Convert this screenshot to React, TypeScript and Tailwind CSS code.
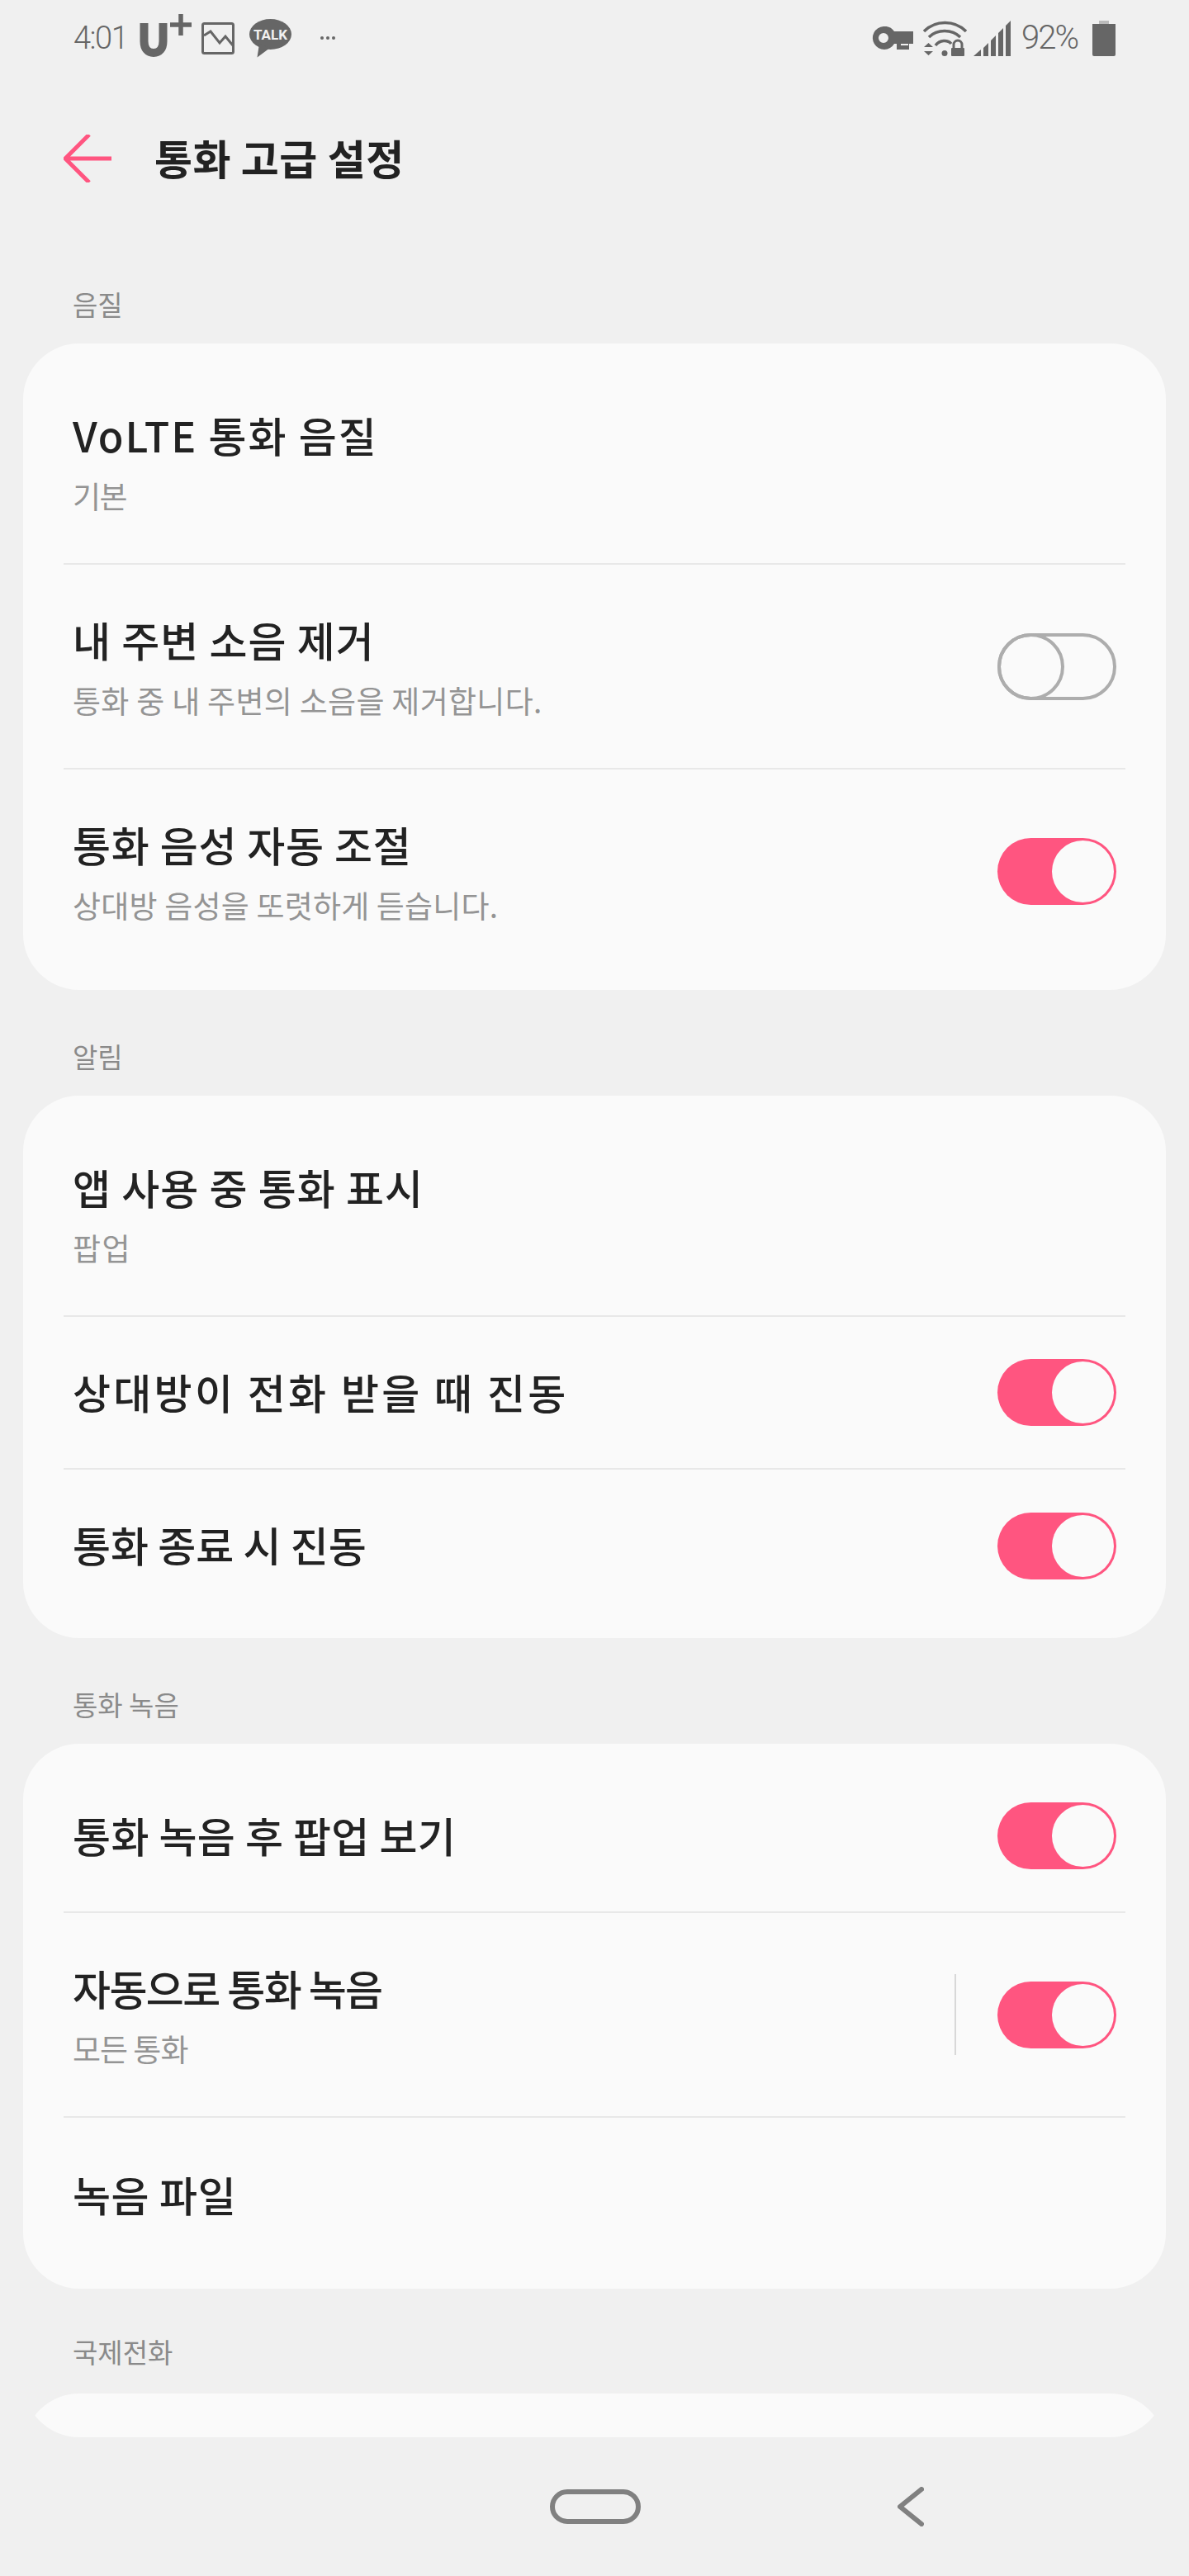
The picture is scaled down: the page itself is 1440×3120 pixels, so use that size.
import type { ReactNode } from "react";

function Toggle({ on }: { on: boolean }) {
  if (on) {
    return (
      <div className="flex h-[81px] w-[144px] shrink-0 items-center justify-end rounded-full bg-[#ff5580] pr-[3px]">
        <div className="h-[75px] w-[75px] rounded-full bg-[#fafafa]" />
      </div>
    );
  }
  return (
    <div className="flex h-[81px] w-[144px] shrink-0 items-center rounded-full border-[4px] border-[#adadad]">
      <div className="-ml-[4px] h-[81px] w-[81px] shrink-0 rounded-full border-[4px] border-[#adadad]" />
    </div>
  );
}

function Row({
  title,
  sub,
  toggle,
  height,
  split,
  titleClass = "",
  subClass = "",
}: {
  title: string;
  sub?: string;
  toggle?: "on" | "off";
  height: string;
  split?: boolean;
  titleClass?: string;
  subClass?: string;
}) {
  return (
    <div className={`mx-[49px] flex items-center justify-between border-b-2 border-[#e8e8e8] px-[11px] last:border-b-0 ${height}`}>
      <div className="pb-[4px]">
        <div className={`text-[50px] leading-[70px] font-medium text-[#222222] ${titleClass}`}>{title}</div>
        {sub && <div className={`mt-[15px] text-[37px] leading-[48px] text-[#949494] ${subClass}`}>{sub}</div>}
      </div>
      {toggle && (
        <div className="flex items-center">
          {split && <div className="mr-[50px] h-[98px] w-[2px] bg-[#d8d8d8]" />}
          <Toggle on={toggle === "on"} />
        </div>
      )}
    </div>
  );
}

function Section({ label, children }: { label: string; children: ReactNode }) {
  return (
    <section>
      <div className="h-[128px] pt-[60px] pl-[88px] text-[33px] leading-[40px] text-[#8a8a8a]">{label}</div>
      <div className="mx-[28px] rounded-[68px] bg-[#fafafa] py-[20px]">{children}</div>
    </section>
  );
}

function StatusLeft() {
  return (
    <div className="flex items-center">
      <span className="w-[81px] pl-[1px] font-['Roboto',sans-serif] text-[38px] font-light tracking-[-1.500px] text-[#666666]">4:01</span>
      <svg width="63" height="52" viewBox="0 0 63 52" className="mr-[12px] mb-[7px]">
        <path d="M5.500 11V33C5.500 42 10 47 17 47C24 47 28.500 42 28.500 33V11" fill="none" stroke="#666666" strokeWidth="10" />
        <path d="M50 0V26M37 13H63" fill="none" stroke="#666666" strokeWidth="5.500" />
      </svg>
      <svg width="40" height="39" viewBox="0 0 40 39" className="mr-[18px]">
        <rect x="1.500" y="1.500" width="37" height="36" rx="2" fill="none" stroke="#666666" strokeWidth="3" />
        <path d="M3 16L11 11L22 25L29 17L38 28" fill="none" stroke="#666666" strokeWidth="3" />
      </svg>
      <svg width="51" height="47" viewBox="0 0 51 47" className="mr-[35px]">
        <ellipse cx="25.500" cy="18.500" rx="25.500" ry="18.500" fill="#666666" />
        <path d="M12 30L9.500 46.500L25 35Z" fill="#666666" />
        <text x="25.500" y="24.500" textAnchor="middle" fontSize="17" fontWeight="700" fontFamily="'Roboto',sans-serif" fill="#f0f0f0">TALK</text>
      </svg>
      <div className="flex gap-[3px]">
        <span className="h-[4px] w-[4px] rounded-full bg-[#666666]" />
        <span className="h-[4px] w-[4px] rounded-full bg-[#666666]" />
        <span className="h-[4px] w-[4px] rounded-full bg-[#666666]" />
      </div>
    </div>
  );
}

function StatusRight() {
  return (
    <div className="flex items-center">
      <svg width="50" height="29" viewBox="0 0 50 29" className="mr-[12px]">
        <path d="M14 0A14 14 0 0 1 27 6H50V21H45V28H30V21H27A14 14 0 1 1 14 0ZM14 8A6 6 0 1 0 14 20A6 6 0 1 0 14 8ZM35 21V23H44V21Z" fill="#666666" fillRule="evenodd" />
      </svg>
      <svg width="53" height="43" viewBox="0 0 53 43" className="mr-[8px]">
        <path d="M1 13C15 -1 38 -1 52 13M7 20C17 10 35 10 45 20M15 30C20 23 30 23 34 28" fill="none" stroke="#666666" strokeWidth="3.500" />
        <circle cx="26" cy="39.500" r="3.500" fill="#666666" />
        <path d="M6.500 27L12 32H1ZM1 37H12L6.500 42Z" fill="#666666" />
        <path d="M37 33V29A5 5 0 0 1 47 29V33" fill="none" stroke="#666666" strokeWidth="3" />
        <rect x="34" y="33" width="16" height="10" rx="1" fill="#666666" />
      </svg>
      <svg width="45" height="43" viewBox="0 0 45 43" className="mr-[13px]">
        <path d="M0 43L9 35V43ZM12 33L18 27V43H12ZM21 24L27 18V43H21ZM30 15L36 9V43H30ZM39 6L45 0V43H39Z" fill="#666666" />
      </svg>
      <span className="mr-[17px] w-[69px] font-['Roboto',sans-serif] text-[40px] leading-none font-light tracking-[-2px] text-[#666666]">92%</span>
      <svg width="28" height="43" viewBox="0 0 28 43">
        <rect x="8" y="0" width="12" height="4" fill="#bbbbbb" />
        <path d="M0 4H28V41A2 2 0 0 1 26 43H2A2 2 0 0 1 0 41Z" fill="#666666" />
      </svg>
    </div>
  );
}

export default function App() {
  return (
    <main className="flex h-[3120px] flex-col overflow-hidden bg-[#f0f0f0] font-['Noto_Sans_CJK_KR','Noto_Sans',sans-serif]">
      <div className="flex h-[96px] items-center justify-between pr-[89px] pb-[4px] pl-[88px]">
        <StatusLeft />
        <StatusRight />
      </div>

      <header className="flex h-[192px] items-center gap-[52px] pl-[77px]">
        <svg width="58" height="58" viewBox="0 0 58 58">
          <path d="M58 29H2M31 0L2 29L31 58" fill="none" stroke="#ff5580" strokeWidth="5" />
        </svg>
        <h1 className="pb-[4px] text-[50px] font-bold tracking-[0.5px] text-[#222222]">통화 고급 설정</h1>
      </header>

      <Section label="음질">
        <Row height="h-[248px]" title="VoLTE 통화 음질" titleClass="tracking-[2px]" sub="기본" subClass="tracking-[-1.5px]" />
        <Row height="h-[248px]" title="내 주변 소음 제거" titleClass="tracking-[1px]" sub="통화 중 내 주변의 소음을 제거합니다." subClass="tracking-[0.3px]" toggle="off" />
        <Row height="h-[247px]" title="통화 음성 자동 조절" titleClass="tracking-[0.8px]" sub="상대방 음성을 또렷하게 듣습니다." subClass="tracking-[0.2px]" toggle="on" />
      </Section>

      <Section label="알림">
        <Row height="h-[248px]" title="앱 사용 중 통화 표시" titleClass="tracking-[1px]" sub="팝업" subClass="tracking-[1.5px]" />
        <Row height="h-[185px]" title="상대방이 전화 받을 때 진동" titleClass="tracking-[3.3px]" toggle="on" />
        <Row height="h-[184px]" title="통화 종료 시 진동" toggle="on" />
      </Section>

      <Section label="통화 녹음">
        <Row height="h-[185px]" title="통화 녹음 후 팝업 보기" titleClass="tracking-[0.4px]" toggle="on" />
        <Row height="h-[248px]" title="자동으로 통화 녹음" titleClass="tracking-[-1.6px]" sub="모든 통화" subClass="tracking-[-1px]" toggle="on" split />
        <Row height="h-[187px]" title="녹음 파일" titleClass="tracking-[0.6px]" />
      </Section>

      <section>
        <div className="h-[127px] pt-[56px] pl-[88px] text-[33px] leading-[40px] text-[#8a8a8a]">국제전화</div>
        {/* top corners of the card cut by the rounded bottom of the scroll area */}
        <div className="mx-[28px] -mb-[15px] h-[68px] overflow-hidden rounded-t-[68px]">
          <div className="-mt-[15px] h-[68px] rounded-b-[68px] bg-[#fafafa]" />
        </div>
      </section>

      <nav className="flex h-[168px] items-center pl-[666px]">
        <div className="h-[42px] w-[110px] rounded-full border-[6px] border-[#808080]" />
        <svg width="32" height="48" viewBox="0 0 32 48" className="ml-[311px]">
          <path d="M29 3L3 24L29 45" fill="none" stroke="#808080" strokeWidth="6" strokeLinecap="round" strokeLinejoin="round" />
        </svg>
      </nav>
    </main>
  );
}
